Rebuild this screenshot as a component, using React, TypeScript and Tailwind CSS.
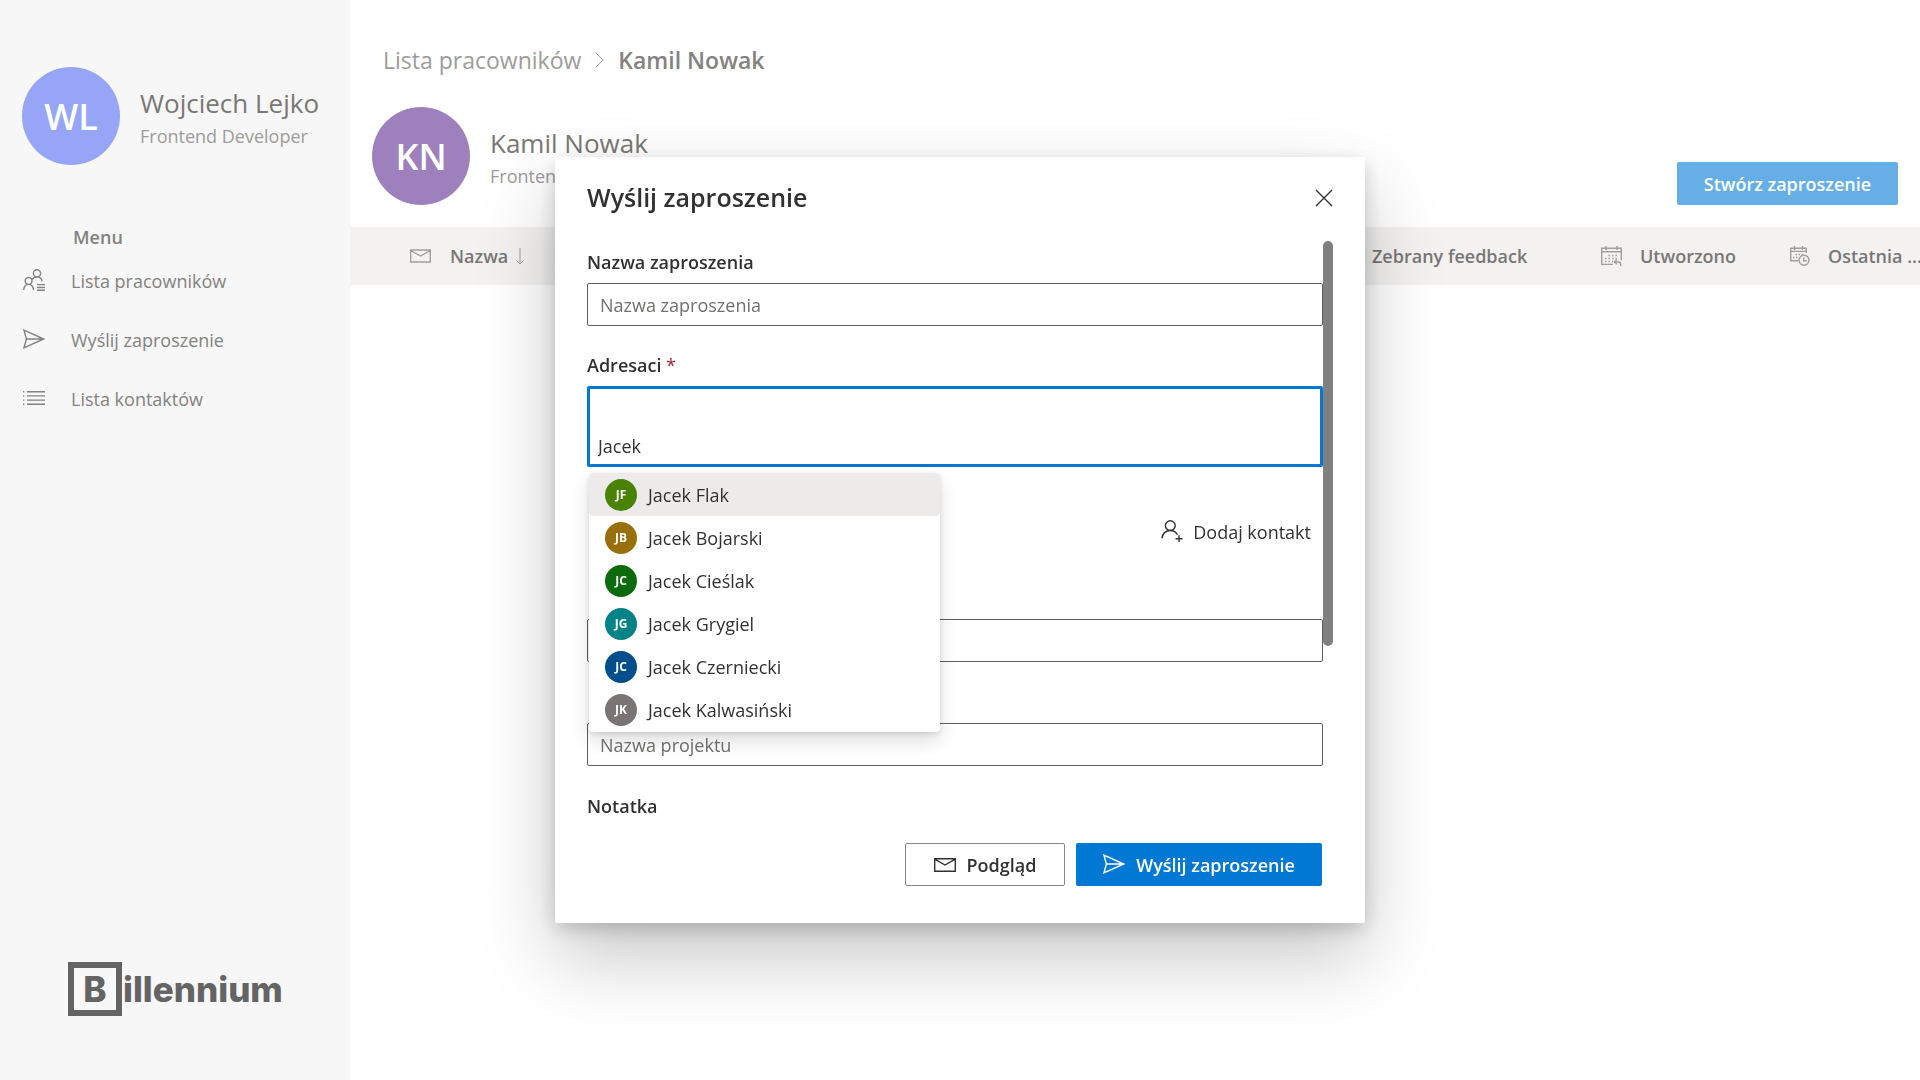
import type { ReactNode } from "react";

type IconProps = { className?: string };

function Svg({ className, box, children }: { className?: string; box: string; children: ReactNode }) {
  return (
    <svg aria-hidden="true" viewBox={box} fill="none" stroke="currentColor" strokeWidth={1.4} className={className}>
      {children}
    </svg>
  );
}

const MailIcon = ({ className }: IconProps) => (
  <Svg className={className} box="0 0 22 14">
    <path d="M.7.7h20.6v12.6H.7zM.7 1.2 11 7l10.3-5.8" />
  </Svg>
);

const SendIcon = ({ className }: IconProps) => (
  <Svg className={className} box="0 0 22 20">
    <path d="M1 1.2 20.6 10 1 18.8 3.4 10zM3.4 10h17.2" />
  </Svg>
);

const PeopleListIcon = ({ className }: IconProps) => (
  <Svg className={className} box="0 0 22 22">
    <circle cx="14" cy="4.3" r="3.6" />
    <circle cx="5.6" cy="12" r="3.4" />
    <path d="M.7 21c.2-3.4 2.2-5.6 4.9-5.6s4.6 1.9 4.9 5.600M9.200 10.600C10.200 8.900 11.900 7.900 14 7.900c2.800 0 4.700 1.900 5 4.600M14 15.600h8M14 18.500h8M14 21.300h8" />
  </Svg>
);

const ListIcon = ({ className }: IconProps) => (
  <Svg className={className} box="0 0 22 14">
    <path d="M4 .7h18M4 4.9h18M4 9.100h18M4 13.300h18M0 .7h1.300M0 4.900h1.300M0 9.100h1.300M0 13.300h1.300" />
  </Svg>
);

const AddPersonIcon = ({ className }: IconProps) => (
  <Svg className={className} box="0 0 22 22">
    <circle cx="9.300" cy="5.600" r="4.900" />
    <path d="M1 18.200c.3-4.600 3.700-7.700 8.300-7.700 3.300 0 5.900 1.700 7.200 4.300M18 15.200v7M14.500 18.700h7" />
  </Svg>
);

const CloseIcon = ({ className }: IconProps) => (
  <Svg className={className} box="0 0 18 18">
    <path d="m1 1 16 16M17 1 1 17" />
  </Svg>
);

const ChevronIcon = ({ className }: IconProps) => (
  <Svg className={className} box="0 0 9 16">
    <path d="m.6.6 7.600 7.400-7.600 7.400" strokeWidth={1} />
  </Svg>
);

const ArrowDownIcon = ({ className }: IconProps) => (
  <Svg className={className} box="0 0 8 17">
    <path d="M4 0v16M.5 12.500 4 16l3.500-3.500" strokeWidth={1} />
  </Svg>
);

const CalendarBackIcon = ({ className }: IconProps) => (
  <Svg className={className} box="0 0 21 20">
    <path d="M12 18.400H.7V2.200h19.600v12M.7 5.800h19.600M5 0v4M16 0v4" />
    <path d="M7.500 9.500h10M4 12.500h13M4 15.500h8" strokeDasharray="1.500 2" />
    <path d="M13.500 16h4c1.500 0 2.200.8 2.200 2.200V20M15.800 13.500 13.500 16l2.300 2.300" />
  </Svg>
);

const CalendarClockIcon = ({ className }: IconProps) => (
  <Svg className={className} box="0 0 20 20">
    <path d="M8 14.800H.7V2.200h15.600V7M.7 5.400h15.600M4.500 0v4M12.500 0v4" />
    <path d="M5.500 8.500h8M3 11.500h6" strokeDasharray="1.500 1.500" />
    <circle cx="14" cy="14.300" r="5" />
    <path d="M13.800 11.200v3.500h3" />
  </Svg>
);

function Profile({ initials, name, role, color }: { initials: string; name: string; role: string; color: string }) {
  return (
    <div className="flex items-center">
      <div className={`flex size-[98px] shrink-0 items-center justify-center rounded-full pt-0.5 text-4xl font-semibold text-white ${color}`}>
        {initials}
      </div>
      <div className="ml-5 pt-1 whitespace-nowrap">
        <p className="text-[26px] leading-9 text-[#797776]">{name}</p>
        <p className="text-lg leading-[30px] text-[#9d9c9a]">{role}</p>
      </div>
    </div>
  );
}

const menu = [
  { label: "Lista pracowników", icon: <PeopleListIcon className="size-[22px]" /> },
  { label: "Wyślij zaproszenie", icon: <SendIcon className="h-5 w-[22px]" /> },
  { label: "Lista kontaktów", icon: <ListIcon className="h-3.5 w-[22px]" /> },
];

function Sidebar() {
  return (
    <aside className="flex w-[350px] shrink-0 flex-col bg-[#f7f7f7] pt-[67px]">
      <div className="px-[22px]">
        <Profile initials="WL" name="Wojciech Lejko" role="Frontend Developer" color="bg-[#96a5f5]" />
      </div>
      <nav className="mt-[58px] text-lg">
        <h2 className="pl-[73px] leading-7 font-semibold text-[#84827f]">Menu</h2>
        <ul>
          {menu.map((item) => (
            <li key={item.label}>
              <a href="#" className="flex h-[59px] items-center text-[#848280]">
                <span className="flex w-[71px] pb-0.5 pl-[23px]">{item.icon}</span>
                {item.label}
              </a>
            </li>
          ))}
        </ul>
      </nav>
      <div className="mt-auto mb-16 ml-[68px] flex items-center font-['Inter',sans-serif] text-[35px] font-extrabold text-[#646464]">
        <span className="flex size-[54px] items-center justify-center border-6 border-[#646464]">B</span>
        <span className="ml-px">illennium</span>
      </div>
    </aside>
  );
}

function TableHeader() {
  return (
    <table className="mt-[22px] w-full table-fixed text-left text-lg text-[#797776]">
      <thead>
        <tr className="h-[58px] bg-[#f3f2f1]">
          <th className="w-[100px] pl-[60px] text-[#a19f9d]"><MailIcon className="h-3.5 w-[21px]" /></th>
          <th className="font-semibold">
            <button type="button" className="flex items-center gap-2">
              Nazwa <ArrowDownIcon className="h-[17px] w-2 text-[#a19f9d]" />
            </button>
          </th>
          <th className="w-[213px] font-semibold">Zebrany feedback</th>
          <th className="w-[189px] pl-4 font-semibold">
            <span className="flex items-center gap-[18px]">
              <CalendarBackIcon className="h-5 w-[21px] text-[#a19f9d]" /> Utworzono
            </span>
          </th>
          <th className="w-[146px] pl-4 font-semibold whitespace-nowrap">
            <span className="flex items-center gap-[18px]">
              <CalendarClockIcon className="size-5 shrink-0 text-[#a19f9d]" /> Ostatnia ...
            </span>
          </th>
        </tr>
      </thead>
    </table>
  );
}

const people = [
  { initials: "JF", name: "Jacek Flak", color: "bg-[#498205]" },
  { initials: "JB", name: "Jacek Bojarski", color: "bg-[#986f0b]" },
  { initials: "JC", name: "Jacek Cieślak", color: "bg-[#0b6a0b]" },
  { initials: "JG", name: "Jacek Grygiel", color: "bg-[#038387]" },
  { initials: "JC", name: "Jacek Czerniecki", color: "bg-[#004e8c]" },
  { initials: "JK", name: "Jacek Kalwasiński", color: "bg-[#7a7574]" },
];

function Suggestions() {
  return (
    <ul className="absolute top-full left-0.5 z-10 mt-1.5 w-[351px] overflow-hidden rounded-sm bg-white pb-px shadow-[0_9px_19px_rgba(0,0,0,0.13),0_2px_5px_rgba(0,0,0,0.11)]">
      {people.map((p) => (
        <li key={p.name} className="rounded-sm first:bg-[#edebe9]">
          <button type="button" className="flex h-[43px] w-full items-center gap-[11px] px-4 text-left">
            <span className={`flex size-8 items-center justify-center rounded-full text-xs font-bold text-white ${p.color}`}>{p.initials}</span>
            {p.name}
          </button>
        </li>
      ))}
    </ul>
  );
}

const labelClass = "mb-[7px] block leading-7 font-semibold";
const inputClass = "block h-[43px] w-full rounded-xs border border-[#605e5c] px-3 outline-none placeholder:text-[#72706e]";

function InviteDialog() {
  return (
    <div className="fixed inset-0 flex items-center justify-center">
      <div
        role="dialog"
        aria-labelledby="dialog-title"
        className="w-[810px] rounded-xs bg-white pb-[37px] text-lg text-[#323130] shadow-[0_35px_78px_rgba(0,0,0,0.22),0_6px_19px_rgba(0,0,0,0.18)]"
      >
        <header className="mb-1 flex h-20 items-center justify-between px-8">
          <h1 id="dialog-title" className="text-[25px] font-semibold">Wyślij zaproszenie</h1>
          <button type="button" aria-label="Zamknij" className="pt-0.5"><CloseIcon className="size-[18px]" /></button>
        </header>
        <div className="flex px-8">
          <form className="flex-1 pt-[7px]">
            <label htmlFor="invite-name" className={labelClass}>Nazwa zaproszenia</label>
            <input id="invite-name" placeholder="Nazwa zaproszenia" className={inputClass} />

            <label htmlFor="recipients" className={`${labelClass} mt-[25px]`}>
              Adresaci <span className="font-normal text-[#a4262c]">*</span>
            </label>
            <div className="relative">
              <div className="flex h-[81px] items-end rounded-xs border-3 border-[#0078d4] px-2 pb-1">
                <input id="recipients" defaultValue="Jacek" className="w-full outline-none" />
              </div>
              <Suggestions />
            </div>

            <div className="mt-[43px] flex justify-end">
              <button type="button" className="flex h-[43px] items-center gap-2.5 px-3">
                <AddPersonIcon className="mb-0.5 size-[22px]" /> Dodaj kontakt
              </button>
            </div>

            <input aria-label="Temat" className={`${inputClass} mt-[66px]`} />
            <input aria-label="Nazwa projektu" placeholder="Nazwa projektu" className={`${inputClass} mt-[61px]`} />

            <p className="mt-[26px] leading-7 font-semibold">Notatka</p>
          </form>
          <div className="w-2.5">
            <div className="h-[405px] rounded-full bg-[#808080]" />
          </div>
        </div>
        <footer className="mt-[23px] flex justify-end gap-[11px] pr-[43px] font-semibold">
          <button type="button" className="flex h-[43px] w-40 items-center justify-center gap-[11px] rounded-xs border border-[#8a8886]">
            <MailIcon className="h-3.5 w-[22px]" /> Podgląd
          </button>
          <button type="button" className="flex h-[43px] w-[246px] items-center justify-center gap-[11px] rounded-xs bg-[#0078d4] text-white">
            <SendIcon className="mb-0.5 h-5 w-[22px]" /> Wyślij zaproszenie
          </button>
        </footer>
      </div>
    </div>
  );
}

export default function App() {
  return (
    <div className="flex min-h-screen bg-white font-['Open_Sans','Noto_Sans',sans-serif]">
      <Sidebar />
      <main className="min-w-0 flex-1">
        <nav aria-label="Ścieżka" className="flex h-[106px] items-center pt-0 pb-0 pl-[33px] text-[23px] text-[#9d9c9a]">
          <div className="flex items-center pt-3.5">
            <a href="#">Lista pracowników</a>
            <ChevronIcon className="mx-3.5 h-4 w-[9px]" />
            <span className="font-semibold text-[#84827f]">Kamil Nowak</span>
          </div>
        </nav>
        <div className="flex items-end justify-between pt-px pr-[22px] pl-[22px]">
          <Profile initials="KN" name="Kamil Nowak" role="Frontend Developer" color="bg-[#9e81bc]" />
          <button type="button" className="h-[43px] w-[221px] rounded-xs bg-[#66aee6] text-lg font-semibold text-white">
            Stwórz zaproszenie
          </button>
        </div>
        <TableHeader />
      </main>
      <InviteDialog />
    </div>
  );
}
